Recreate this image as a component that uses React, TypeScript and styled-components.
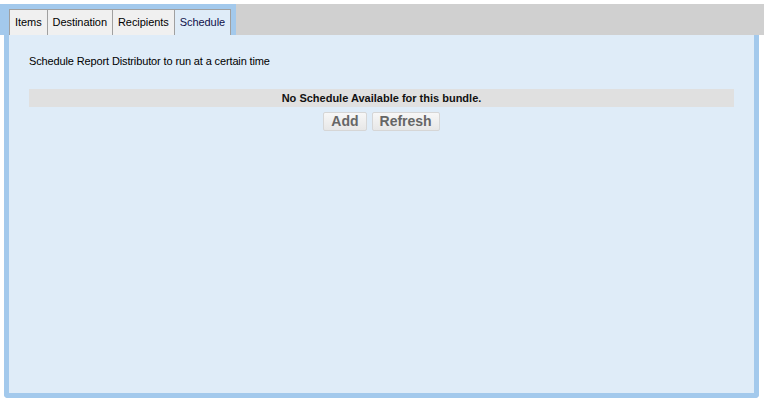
import React, { useState } from "react";
import styled, { createGlobalStyle } from "styled-components";

const GlobalStyle = createGlobalStyle`
  html, body {
    margin: 0;
    padding: 0;
    background: #ffffff;
  }
  body {
    font-family: "Liberation Sans", Arial, sans-serif;
  }
`;

const Page = styled.div`
  width: 764px;
  height: 404px;
  padding-top: 4px;
  box-sizing: border-box;
`;

const Header = styled.div`
  display: flex;
  height: 31px;
`;

const TabStrip = styled.div`
  display: flex;
  align-items: flex-end;
  background-color: #a3c9ec;
  padding: 5px 5px 0 9px;
`;

const Tab = styled.div<{ $active?: boolean }>`
  height: 25px;
  line-height: 25px;
  padding: 0 5px;
  font-size: 11px;
  letter-spacing: -0.06px;
  color: ${(p) => (p.$active ? "#10104a" : "#000000")};
  background-color: ${(p) => (p.$active ? "#dfecf8" : "#f0f0f0")};
  border: 1px solid #a0a0a0;
  border-bottom: none;
  margin-left: -1px;
  cursor: pointer;
  &:first-child {
    margin-left: 0;
  }
`;

const Filler = styled.div`
  flex: 1;
  background-color: #d0d0d0;
`;

const Panel = styled.div`
  margin: 0 5px 0 4px;
  height: 363px;
  box-sizing: border-box;
  border: 5px solid #a3c9ec;
  border-top: none;
  border-radius: 0 0 4px 4px;
  background-color: #dfecf8;
  padding: 20px 20px;
`;

const Intro = styled.div`
  font-size: 11px;
  letter-spacing: -0.13px;
  color: #000000;
  line-height: 13px;
`;

const EmptyBar = styled.div`
  margin-top: 21px;
  height: 18px;
  line-height: 18px;
  background-color: #e0e0e0;
  text-align: center;
  font-size: 11px;
  font-weight: bold;
  color: #111111;
`;

const Actions = styled.div`
  display: flex;
  justify-content: center;
  gap: 5px;
  margin-top: 5px;
`;

const Button = styled.button`
  height: 19px;
  padding: 0 7px;
  font-family: "Liberation Sans", Arial, sans-serif;
  font-size: 14px;
  font-weight: bold;
  line-height: 17px;
  color: #666666;
  background: linear-gradient(#f7f7f7, #e7e7e7);
  border: 1px solid #d6d6d6;
  border-radius: 2px;
  cursor: pointer;
`;

const tabs = ["Items", "Destination", "Recipients", "Schedule"];

export default function App() {
  const [active, setActive] = useState("Schedule");

  return (
    <Page>
      <GlobalStyle />
      <Header>
        <TabStrip>
          {tabs.map((t) => (
            <Tab key={t} $active={t === active} onClick={() => setActive(t)}>
              {t}
            </Tab>
          ))}
        </TabStrip>
        <Filler />
      </Header>
      <Panel>
        <Intro>Schedule Report Distributor to run at a certain time</Intro>
        <EmptyBar>No Schedule Available for this bundle.</EmptyBar>
        <Actions>
          <Button>Add</Button>
          <Button>Refresh</Button>
        </Actions>
      </Panel>
    </Page>
  );
}
